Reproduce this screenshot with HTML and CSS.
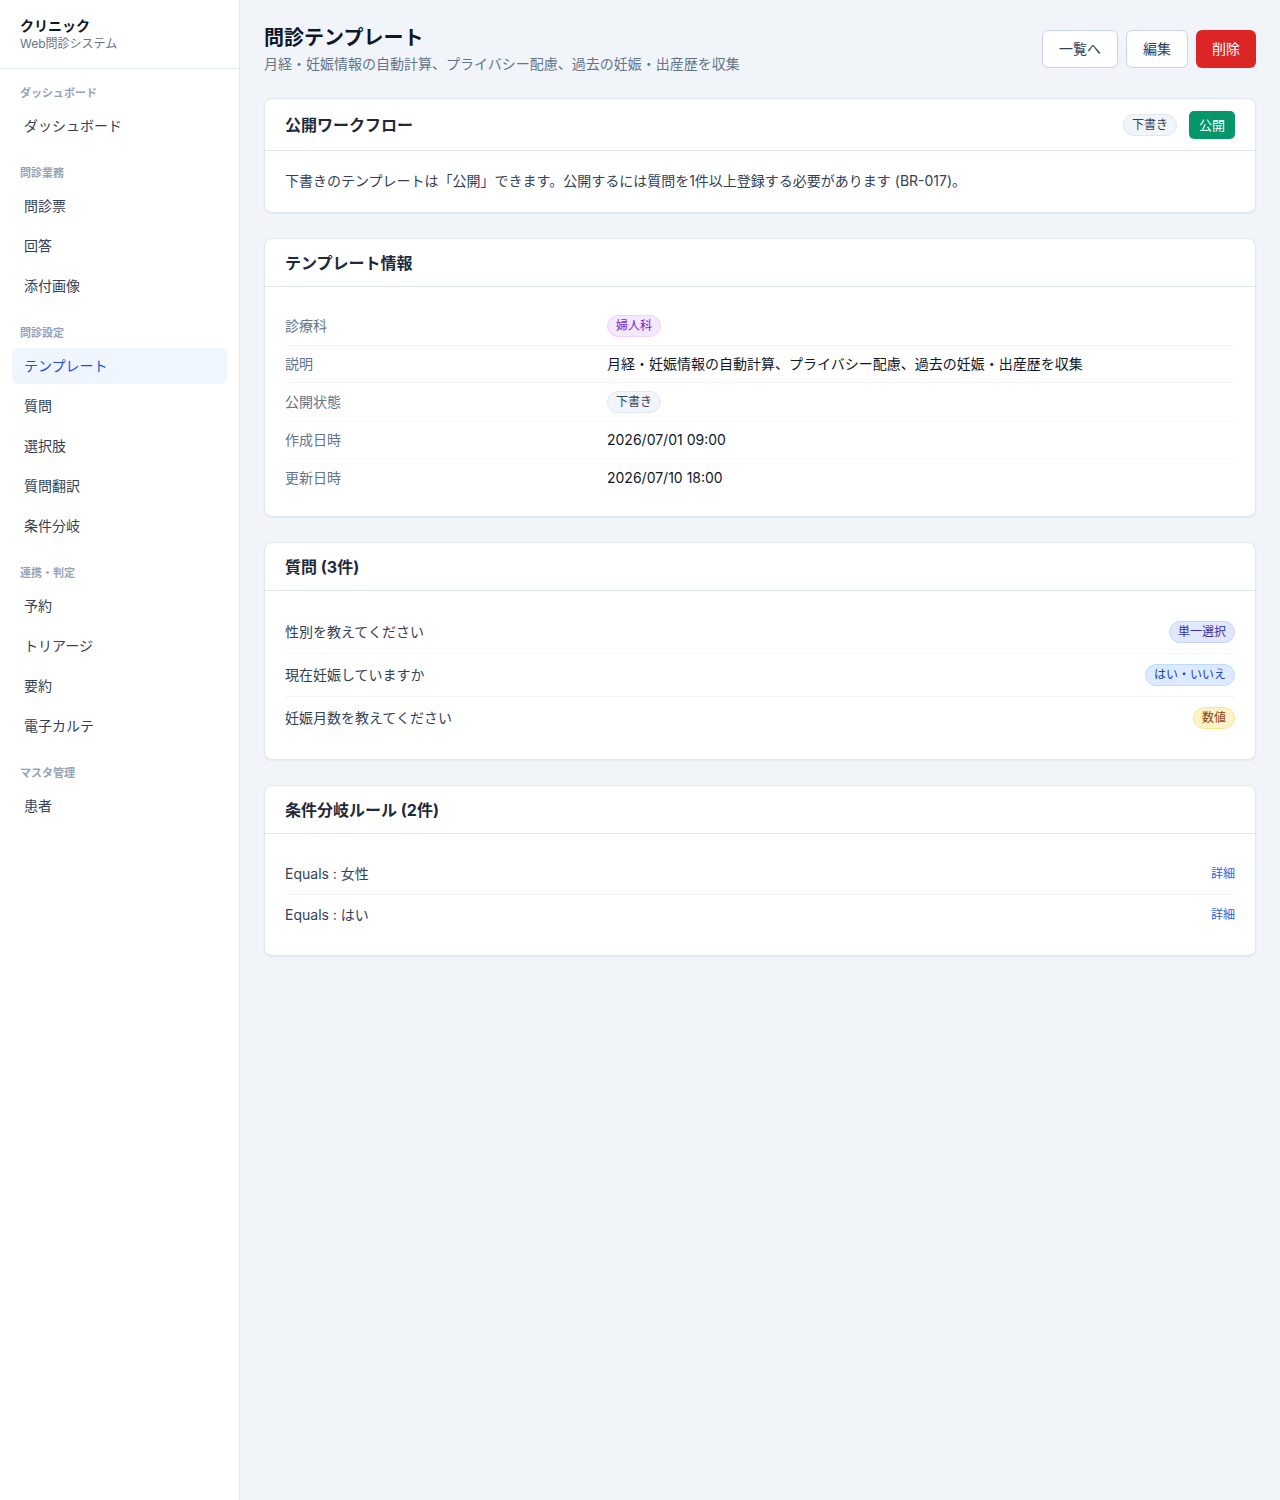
FILE: index.html
```html
<!DOCTYPE html>
<html lang="ja">
<head>
  <meta charset="UTF-8" />
  <title>問診テンプレート</title>
  <link rel="stylesheet" href="styles.css">
</head>
<body>
  <div class="layout">
    <aside class="sidebar">
      <div class="brand">
        <div class="brand-name">クリニック</div>
        <div class="brand-sub">Web問診システム</div>
      </div>
      <nav class="nav">
        <div class="nav-label">ダッシュボード</div>
        <a class="nav-item">ダッシュボード</a>

        <div class="nav-label">問診業務</div>
        <a class="nav-item">問診票</a>
        <a class="nav-item">回答</a>
        <a class="nav-item">添付画像</a>

        <div class="nav-label">問診設定</div>
        <a class="nav-item active">テンプレート</a>
        <a class="nav-item">質問</a>
        <a class="nav-item">選択肢</a>
        <a class="nav-item">質問翻訳</a>
        <a class="nav-item">条件分岐</a>

        <div class="nav-label">連携・判定</div>
        <a class="nav-item">予約</a>
        <a class="nav-item">トリアージ</a>
        <a class="nav-item">要約</a>
        <a class="nav-item">電子カルテ</a>

        <div class="nav-label">マスタ管理</div>
        <a class="nav-item">患者</a>
      </nav>
    </aside>

    <main class="main">
      <div class="page-head">
        <div>
          <h1 class="page-title">問診テンプレート</h1>
          <p class="page-sub">月経・妊娠情報の自動計算、プライバシー配慮、過去の妊娠・出産歴を収集</p>
        </div>
        <div class="actions">
          <button class="btn">一覧へ</button>
          <button class="btn">編集</button>
          <button class="btn danger">削除</button>
        </div>
      </div>

      <section class="card">
        <div class="card-head">
          <h2 class="card-title">公開ワークフロー</h2>
          <div class="head-tools">
            <span class="badge gray">下書き</span>
            <button class="btn-sm success">公開</button>
          </div>
        </div>
        <div class="card-body">
          <p class="note">下書きのテンプレートは「公開」できます。公開するには質問を1件以上登録する必要があります (BR-017)。</p>
        </div>
      </section>

      <section class="card">
        <div class="card-head">
          <h2 class="card-title">テンプレート情報</h2>
        </div>
        <div class="card-body">
          <dl class="info">
            <div class="info-row"><dt>診療科</dt><dd><span class="badge purple">婦人科</span></dd></div>
            <div class="info-row"><dt>説明</dt><dd>月経・妊娠情報の自動計算、プライバシー配慮、過去の妊娠・出産歴を収集</dd></div>
            <div class="info-row"><dt>公開状態</dt><dd><span class="badge gray">下書き</span></dd></div>
            <div class="info-row"><dt>作成日時</dt><dd>2026/07/01 09:00</dd></div>
            <div class="info-row"><dt>更新日時</dt><dd>2026/07/10 18:00</dd></div>
          </dl>
        </div>
      </section>

      <section class="card">
        <div class="card-head">
          <h2 class="card-title">質問 (3件)</h2>
        </div>
        <div class="card-body">
          <ul class="list">
            <li class="list-row"><span>性別を教えてください</span><span class="badge indigo">単一選択</span></li>
            <li class="list-row"><span>現在妊娠していますか</span><span class="badge blue">はい・いいえ</span></li>
            <li class="list-row"><span>妊娠月数を教えてください</span><span class="badge amber">数値</span></li>
          </ul>
        </div>
      </section>

      <section class="card">
        <div class="card-head">
          <h2 class="card-title">条件分岐ルール (2件)</h2>
        </div>
        <div class="card-body">
          <ul class="list">
            <li class="list-row"><span>Equals : 女性</span><a class="link">詳細</a></li>
            <li class="list-row"><span>Equals : はい</span><a class="link">詳細</a></li>
          </ul>
        </div>
      </section>
    </main>
  </div>
</body>
</html>
```

FILE: styles.css
```css
/* Base */
* {
  box-sizing: border-box;
}
body {
  margin: 0;
  font-family: Inter, "Noto Sans CJK JP", sans-serif;
  font-size: 14px;
  color: #1e293b;
  background-color: #f1f5f9;
}
h1, h2, p, dl, dd, ul {
  margin: 0;
  padding: 0;
}
.layout {
  display: flex;
  min-height: 1500px;
}

/* Sidebar */
.sidebar {
  width: 240px;
  flex-shrink: 0;
  background-color: #fff;
  border-right: 1px solid #e2e8f0;
}
.brand {
  height: 69px;
  padding: 17px 20px 0;
  border-bottom: 1px solid #e2e8f0;
}
.brand-name {
  font-size: 14px;
  font-weight: 700;
  line-height: 18px;
  color: #0f172a;
}
.brand-sub {
  font-size: 12px;
  line-height: 18px;
  color: #64748b;
}
.nav {
  display: flex;
  flex-direction: column;
  padding: 0 12px;
}
.nav-label {
  margin-top: 17px;
  margin-bottom: 7px;
  padding-left: 8px;
  font-size: 11px;
  line-height: 16px;
  font-weight: 700;
  color: #94a3b8;
}
.nav-label:first-child {
  margin-top: 16px;
}
.nav-item {
  display: block;
  padding: 8px 12px;
  margin-bottom: 4px;
  line-height: 20px;
  border-radius: 6px;
  color: #334155;
}
.nav-item.active {
  background-color: #eff6ff;
  color: #1d4ed8;
}

/* Main */
.main {
  flex: 1;
  padding: 24px 24px 40px;
}
.page-head {
  display: flex;
  justify-content: space-between;
  align-items: center;
  margin-bottom: 24px;
}
.page-title {
  font-size: 20px;
  line-height: 28px;
  font-weight: 700;
  color: #0f172a;
}
.page-sub {
  margin-top: 2px;
  line-height: 20px;
  color: #64748b;
}
.actions {
  display: flex;
  gap: 8px;
}
.btn {
  font-family: inherit;
  font-size: 14px;
  line-height: 20px;
  padding: 8px 16px;
  border: 1px solid #cbd5e1;
  border-radius: 6px;
  background-color: #fff;
  color: #334155;
}
.btn.danger {
  padding: 9px 16px;
  border: none;
  background-color: #dc2626;
  color: #fff;
}

/* Cards */
.card {
  background-color: #fff;
  border: 1px solid #e2e8f0;
  border-radius: 8px;
  box-shadow: 0 1px 2px rgba(15, 23, 42, 0.05);
  margin-bottom: 25px;
}
.card-head {
  display: flex;
  justify-content: space-between;
  align-items: center;
  padding: 12px 20px 11px;
  border-bottom: 1px solid #e2e8f0;
}
.card-title {
  font-size: 16px;
  line-height: 24px;
  font-weight: 700;
  color: #1e293b;
}
.head-tools {
  display: flex;
  align-items: center;
  gap: 12px;
}
.btn-sm {
  font-family: inherit;
  font-size: 13px;
  line-height: 20px;
  padding: 4px 10px;
  border: none;
  border-radius: 5px;
}
.btn-sm.success {
  background-color: #059669;
  color: #fff;
}
.card-body {
  padding: 20px;
}
.note {
  line-height: 20px;
  margin-bottom: 1px;
  color: #334155;
}

/* Badges */
.badge {
  display: inline-block;
  font-size: 12px;
  line-height: 20px;
  padding: 0 8px;
  border-radius: 999px;
  border: 1px solid transparent;
}
.badge.gray { background-color: #f1f5f9; border-color: #e2e8f0; color: #334155; }
.badge.purple { background-color: #f3e8ff; border-color: #e9d5ff; color: #7e22ce; }
.badge.indigo { background-color: #e0e7ff; border-color: #c7d2fe; color: #3730a3; }
.badge.blue { background-color: #dbeafe; border-color: #bfdbfe; color: #1e40af; }
.badge.amber { background-color: #fef3c7; border-color: #fde68a; color: #92400e; }

/* Info list */
.info-row {
  display: flex;
  align-items: center;
  min-height: 37px;
  padding: 8px 0;
  border-bottom: 1px solid #f1f5f9;
}
.info-row:last-child {
  border-bottom: none;
}
.info-row dt {
  width: 322px;
  flex-shrink: 0;
  color: #64748b;
  line-height: 20px;
}
.info-row dd {
  line-height: 20px;
  color: #0f172a;
}

/* Row lists */
.list {
  list-style: none;
}
.list-row {
  display: flex;
  justify-content: space-between;
  align-items: center;
  padding: 10px 0;
  line-height: 20px;
  color: #334155;
  border-bottom: 1px solid #f1f5f9;
}
.list-row:last-child {
  border-bottom: none;
}
.link {
  font-size: 12px;
  color: #2563eb;
}
```
